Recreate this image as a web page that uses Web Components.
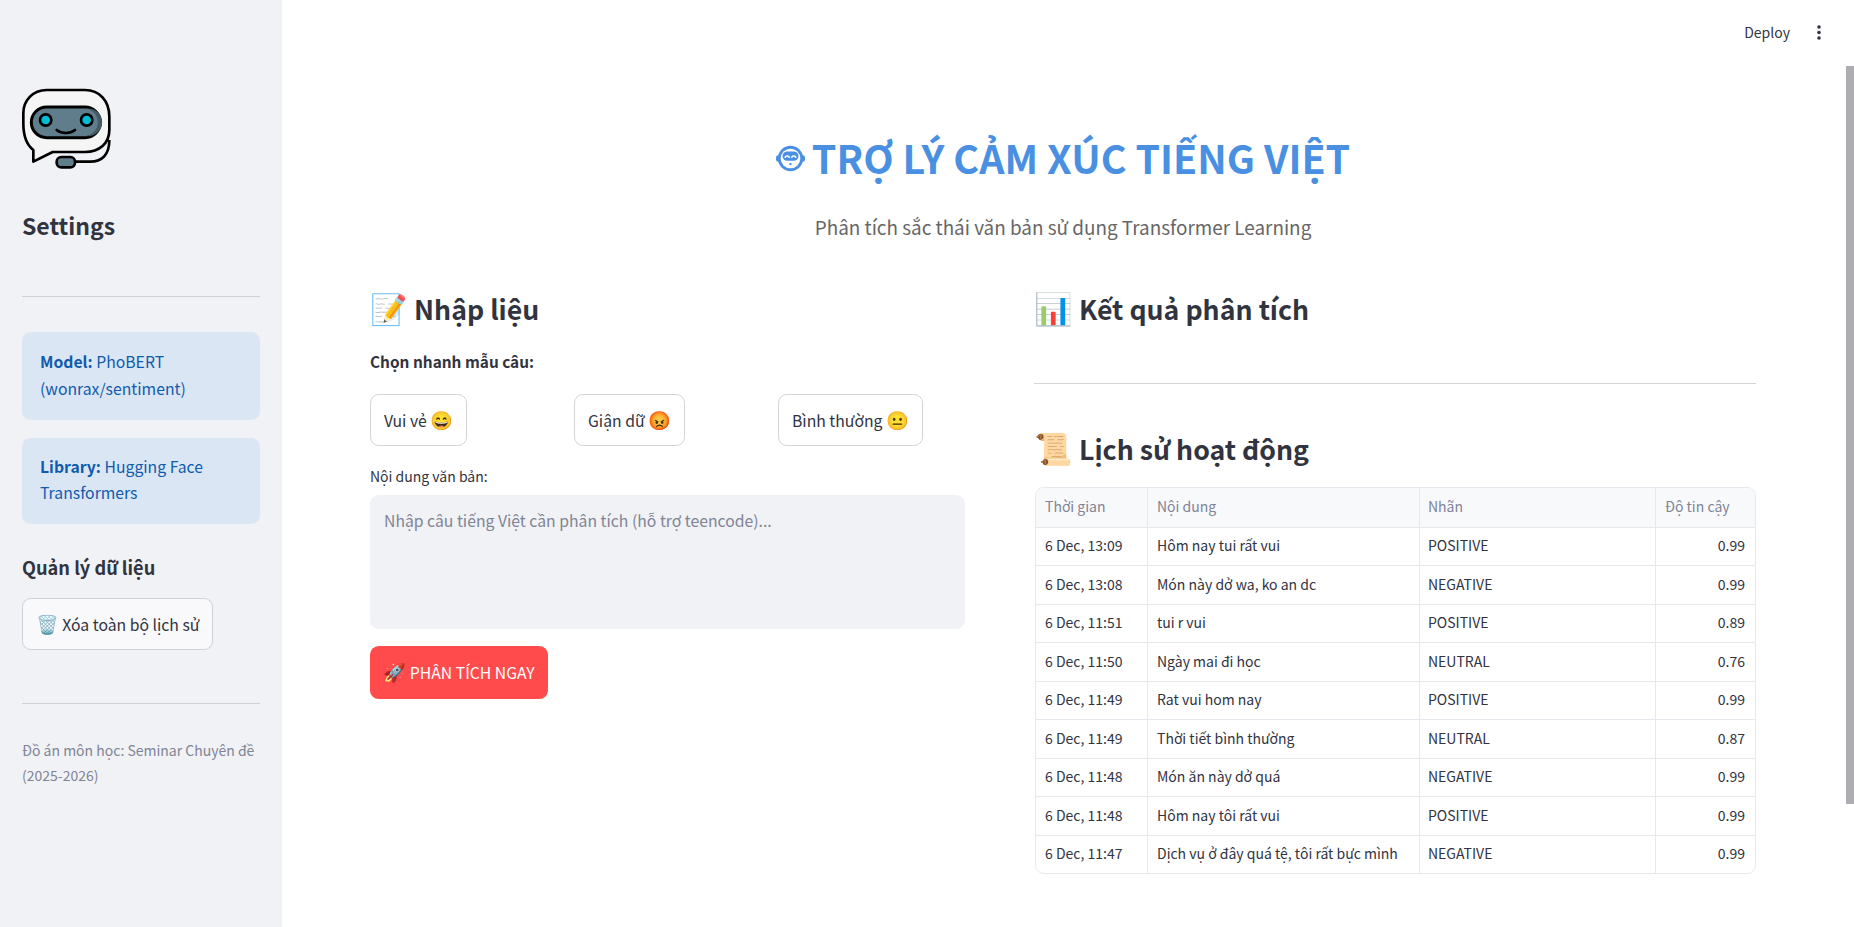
<!DOCTYPE html>
<html lang="vi">
<head>
<meta charset="utf-8">
<title>Trợ lý cảm xúc tiếng Việt</title>
<style>
  html, body {
    margin: 0;
    height: 100%;
    overflow: hidden;
    font-family: "Noto Sans CJK JP", "Noto Sans", sans-serif;
    color: #31333f;
    background: #fff;
  }
</style>
</head>
<body>
<app-shell>
  <app-sidebar slot="sidebar"></app-sidebar>
  <app-header slot="header"></app-header>
  <title-block></title-block>
  <input-panel slot="left"></input-panel>
  <result-panel slot="right"></result-panel>
</app-shell>

<script>
const define = (name, css, html) => {
  const template = document.createElement('template')
  template.innerHTML = `<style>.e { font-size: 1.16em; line-height: 1; }${css}</style>${html}`
  customElements.define(name, class extends HTMLElement {
    constructor() {
      super()
      this.attachShadow({ mode: 'open' })
        .appendChild(template.content.cloneNode(true))
    }
  })
}

define('app-shell', `
  :host { display: flex; height: 927px; position: relative; overflow: hidden; }
  .side { flex: 0 0 282px; }
  main { flex: 1; padding: 125px 98px 0 88px; }
  .cols { display: grid; grid-template-columns: 595px 722px; column-gap: 69px; margin-top: 45px; }
  .bar { position: absolute; right: 0; top: 66px; width: 8px; height: 738px; background: #aeaeb2; }
`, `
  <div class="side"><slot name="sidebar"></slot></div>
  <main>
    <slot></slot>
    <div class="cols"><slot name="left"></slot><slot name="right"></slot></div>
  </main>
  <slot name="header"></slot>
  <div class="bar"></div>
`)

define('app-header', `
  :host { position: absolute; top: 0; right: 0; display: flex; align-items: center; gap: 26px; height: 64px; padding-right: 32px; font-size: 14px; }
  svg { display: block; }
`, `
  <span>Deploy</span>
  <svg width="6" height="16" viewBox="0 0 6 16" fill="#31333f"><circle cx="3" cy="3" r="1.8"/><circle cx="3" cy="8.5" r="1.8"/><circle cx="3" cy="14" r="1.8"/></svg>
`)

define('app-sidebar', `
  :host { display: block; height: 927px; box-sizing: border-box; background: #f0f2f6; padding: 88px 22px 0; }
  svg { display: block; }
  h2 { margin: 37px 0 0; font-size: 23px; line-height: 36px; font-weight: 600; }
  hr { border: 0; border-top: 1px solid #cfd1d7; margin: 0; }
  .first { margin-top: 53px; }
  .note { background: #dbe6f5; color: #0f5bad; border-radius: 8.8px; padding: 16px 18px 18px; font-size: 15.75px; line-height: 27px; }
  .note + .note { margin-top: 18px; padding-bottom: 18px; line-height: 26px; }
  b { font-weight: 600; }
  h3 { margin: 30px 0 0; font-size: 18.2px; line-height: 26px; font-weight: 600; }
  button { display: block; margin-top: 18px; height: 52px; width: 191px; border: 1px solid #cfd1d7; border-radius: 8.8px; background: #f9f9fb; color: inherit; font: inherit; font-size: 15.75px; padding: 0; }
  .low { margin-top: 53px; }
  p { margin: 34px 0 0; font-size: 14px; line-height: 25px; color: #808495; }
`, `
  <svg width="90" height="82" viewBox="36 24 270 246">
    <path d="M195 245H240C275 245 298 225 298 180" fill="none" stroke="#000" stroke-width="8"/>
    <path d="M110 30H225C268 30 298 62 298 110V150C298 190 268 216 225 216H128L70 245V210C50 195 40 170 40 130V100C40 62 68 30 110 30Z" fill="#f5f5f5" stroke="#000" stroke-width="8" stroke-linejoin="round"/>
    <rect x="64" y="81" width="207" height="92" rx="46" fill="#607d8b" stroke="#000" stroke-width="9"/>
    <path d="M235 85.500A41.500 41.500 0 0 1 235 168.500H222A41.500 41.500 0 0 0 222 85.500Z" fill="#455a64"/>
    <circle cx="107" cy="120" r="17" fill="#00bcd4" stroke="#000" stroke-width="8"/>
    <circle cx="230" cy="120" r="17" fill="#00bcd4" stroke="#000" stroke-width="8"/>
    <path d="M140 150C155 162 180 162 195 150" fill="none" stroke="#000" stroke-width="8" stroke-linecap="round"/>
    <rect x="140" y="231" width="55" height="31" rx="14" fill="#607d8b" stroke="#000" stroke-width="8"/>
  </svg>
  <h2>Settings</h2>
  <hr class="first">
  <div style="height:35px"></div>
  <div class="note"><b>Model:</b> PhoBERT<br>(wonrax/sentiment)</div>
  <div class="note"><b>Library:</b> Hugging Face<br>Transformers</div>
  <h3>Quản lý dữ liệu</h3>
  <button><span class="e">🗑️</span> Xóa toàn bộ lịch sử</button>
  <hr class="low">
  <p>Đồ án môn học: Seminar Chuyên đề (2025-2026)</p>
`)

define('title-block', `
  :host { display: block; text-align: center; }
  h1 { margin: 0; font-size: 39.4px; line-height: 64px; font-weight: 700; color: #4a90e2; display: flex; justify-content: center; align-items: center; gap: 7px; }
  svg { display: block; margin-top: 2px; }
  p { margin: 23px 0 0; font-size: 18.9px; line-height: 30px; color: #666; }
`, `
  <h1><svg width="29" height="29" viewBox="0 0 31 31"><circle cx="15.500" cy="15.500" r="13.500" fill="#4a90e2"/><rect x="0" y="12" width="31" height="7" rx="2.500" fill="#4a90e2"/><circle cx="15.500" cy="15.500" r="10.500" fill="#fff"/><rect x="7" y="8" width="17" height="10" rx="5" fill="#4a90e2"/><path d="M9.800 15a2.200 2.200 0 0 1 4.400 0M16.800 15a2.200 2.200 0 0 1 4.400 0" fill="none" stroke="#fff" stroke-width="1.500"/><circle cx="15.500" cy="21.500" r="1.300" fill="#4a90e2"/></svg>TRỢ LÝ CẢM XÚC TIẾNG VIỆT</h1>
  <p>Phân tích sắc thái văn bản sử dụng Transformer Learning</p>
`)

define('input-panel', `
  :host { display: block; }
  h2 { margin: 0; font-size: 26.7px; line-height: 44px; font-weight: 600; }
  .e2 { font-size: 1.13em; line-height: 1; }
  .sub { margin-top: 17px; font-size: 15.4px; line-height: 26px; font-weight: 600; }
  .row { display: grid; grid-template-columns: repeat(3, 204px); margin-top: 20px; }
  button { justify-self: start; height: 52px; padding: 0 13px; border: 1px solid #d3d4d8; border-radius: 8.8px; background: #fff; color: inherit; font: inherit; font-size: 15.75px; }
  label { display: block; margin-top: 20px; font-size: 14px; line-height: 20px; }
  .area { margin-top: 9px; height: 134px; box-sizing: border-box; border-radius: 8.8px; background: #f0f2f6; padding: 13px 14px; font-size: 15.75px; line-height: 26px; color: #808495; }
  .go { display: block; margin-top: 17px; height: 53px; width: 178px; padding: 0; border: 0; background: #ff4b4b; color: #fff; }
`, `
  <h2><span class="e2">📝</span> Nhập liệu</h2>
  <div class="sub">Chọn nhanh mẫu câu:</div>
  <div class="row">
    <button>Vui vẻ <span class="e">😄</span></button>
    <button>Giận dữ <span class="e">😡</span></button>
    <button>Bình thường <span class="e">😐</span></button>
  </div>
  <label>Nội dung văn bản:</label>
  <div class="area">Nhập câu tiếng Việt cần phân tích (hỗ trợ teencode)...</div>
  <button class="go"><span class="e">🚀</span> PHÂN TÍCH NGAY</button>
`)

define('result-panel', `
  :host { display: block; }
  h2 { margin: 0; font-size: 26.7px; line-height: 44px; font-weight: 600; }
  hr { border: 0; border-top: 1px solid #d3d4d8; margin: 52px 0 43px; }
`, `
  <h2><span class="e">📊</span> Kết quả phân tích</h2>
  <hr>
  <h2><span class="e">📜</span> Lịch sử hoạt động</h2>
  <history-table></history-table>
`)

const rows = [
  ['6 Dec, 13:09', 'Hôm nay tui rất vui', 'POSITIVE', '0.99'],
  ['6 Dec, 13:08', 'Món này dở wa, ko an dc', 'NEGATIVE', '0.99'],
  ['6 Dec, 11:51', 'tui r vui', 'POSITIVE', '0.89'],
  ['6 Dec, 11:50', 'Ngày mai đi học', 'NEUTRAL', '0.76'],
  ['6 Dec, 11:49', 'Rat vui hom nay', 'POSITIVE', '0.99'],
  ['6 Dec, 11:49', 'Thời tiết bình thường', 'NEUTRAL', '0.87'],
  ['6 Dec, 11:48', 'Món ăn này dở quá', 'NEGATIVE', '0.99'],
  ['6 Dec, 11:48', 'Hôm nay tôi rất vui', 'POSITIVE', '0.99'],
  ['6 Dec, 11:47', 'Dịch vụ ở đây quá tệ, tôi rất bực mình', 'NEGATIVE', '0.99']
]

define('history-table', `
  :host { display: block; margin: 16px 0 0 1px; border: 1px solid #e6e8ee; border-radius: 8.8px; overflow: hidden; font-size: 14px; }
  .t { display: grid; grid-template-columns: 111px 272px 236px 1fr; grid-auto-rows: 38.5px; }
  .t > div { display: flex; align-items: center; padding: 0 9px 2px; border-top: 1px solid #e6e8ee; border-left: 1px solid #e6e8ee; white-space: nowrap; box-sizing: border-box; }
  .t > .h { background: #f8f9fb; color: #808495; border-top: 0; }
  .t > .first { border-left: 0; padding-left: 9px; }
  .t > .label { padding-left: 8px; }
  .t > .num { justify-content: flex-end; padding-right: 10px; }
`, `
  <div class="t">
    <div class="h first">Thời gian</div><div class="h">Nội dung</div><div class="h label">Nhãn</div><div class="h">Độ tin cậy</div>
    ${rows.map(r => `<div class="first">${r[0]}</div><div>${r[1]}</div><div class="label">${r[2]}</div><div class="num">${r[3]}</div>`).join('')}
  </div>
`)
</script>
</body>
</html>
